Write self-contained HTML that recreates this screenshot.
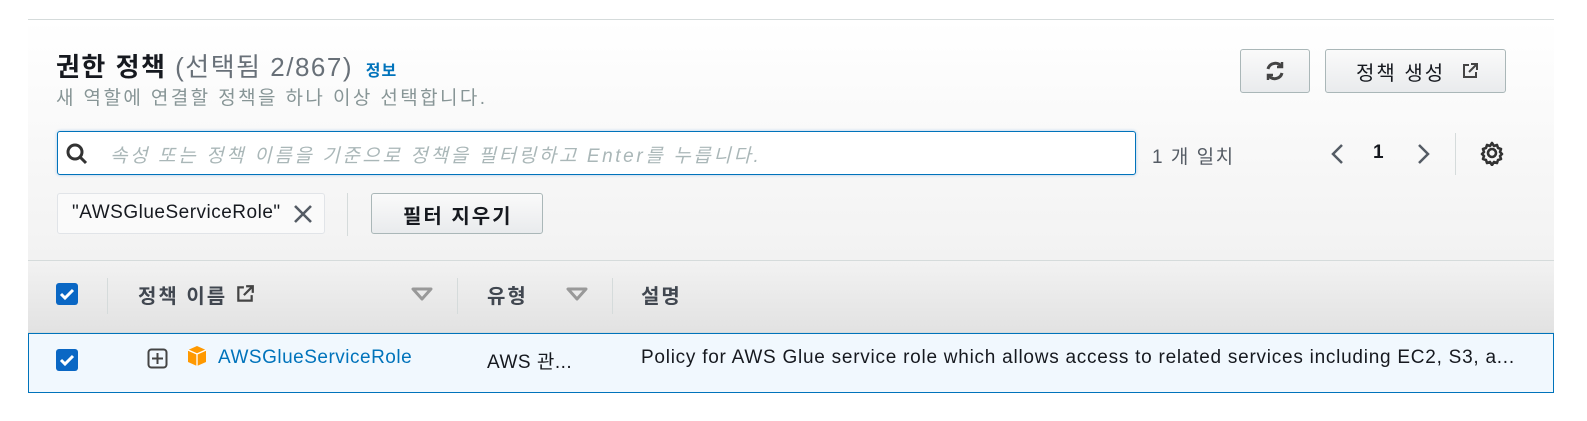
<!DOCTYPE html><html><head><meta charset="utf-8"><style>
body{margin:0;width:1587px;height:421px;background:#fff;font-family:"Liberation Sans","Noto Sans CJK KR",sans-serif;color:#16191f;position:relative;overflow:hidden}
.a{position:absolute;white-space:nowrap}
.panel{left:28px;top:19px;width:1526px;height:241px;border-top:1px solid #d5dbdb;background:linear-gradient(#fff,#f2f2f2)}
.btn{border:1px solid #aab7b8;border-radius:3px;background:linear-gradient(#fafafa,#e9ebed);box-sizing:border-box}
.k{letter-spacing:2px}
</style></head><body>
<div class="a panel"></div>
<div class="a" style="left:56px;top:47px;font-size:26px;letter-spacing:1.5px;font-weight:bold;color:#16191f">권한 정책 <span style="font-weight:normal;color:#687078">(선택됨 2/867)</span> <span style="font-size:16px;letter-spacing:1px;color:#0073bb;margin-left:4px">정보</span></div>
<div class="a" style="left:56px;top:83px;font-size:19px;letter-spacing:2.4px;color:#879596">새 역할에 연결할 정책을 하나 이상 선택합니다.</div>
<div class="a btn" style="left:1240px;top:49px;width:70px;height:44px"></div>
<svg class="a" style="left:1263px;top:59px" width="24" height="24" viewBox="0 0 24 24" fill="none" stroke="#444" stroke-width="3"><path d="M5 10a7.5 7.5 0 0 1 13-3"/><path d="M19 14a7.5 7.5 0 0 1-13 3"/><path d="M19 3v5h-5M5 21v-5h5" stroke-width="2.5"/></svg>
<div class="a btn" style="left:1325px;top:49px;width:181px;height:44px"></div>
<div class="a k" style="left:1356px;top:57px;font-size:20px;color:#16191f">정책 생성</div>
<svg class="a" style="left:1461px;top:62px" width="18" height="18" viewBox="0 0 18 18" fill="none" stroke="#444" stroke-width="2"><path d="M8 3H3v12h12v-5"/><path d="M10 2h6v6M16 2l-8 8"/></svg>
<div class="a" style="left:57px;top:131px;width:1079px;height:44px;box-sizing:border-box;border:1px solid #0073bb;border-radius:3px;background:#fff;box-shadow:0 0 3px #a8c8e8"></div>
<svg class="a" style="left:64px;top:141px" width="26" height="26" viewBox="0 0 26 26" fill="none" stroke="#333" stroke-width="3"><circle cx="11" cy="11" r="7"/><path d="M16 16l6 6"/></svg>
<div class="a" style="left:110px;top:141px;font-size:19px;letter-spacing:2.6px;font-style:italic;color:#aab7b8">속성 또는 정책 이름을 기준으로 정책을 필터링하고 Enter를 누릅니다.</div>
<div class="a" style="left:1152px;top:142px;font-size:19px;letter-spacing:1.5px;color:#545b64">1 개 일치</div>
<svg class="a" style="left:1327px;top:141px" width="110" height="26" viewBox="0 0 110 26" fill="none" stroke="#545b64" stroke-width="2.5"><path d="M15 4L6 13l9 9M92 4l9 9-9 9"/></svg>
<div class="a" style="left:1373px;top:142px;font-size:19px;font-weight:bold">1</div>
<div class="a" style="left:1455px;top:133px;width:1px;height:42px;background:#d5dbdb"></div>
<svg class="a" style="left:1479px;top:140px" width="26" height="26" viewBox="0 0 26 26" fill="none" stroke="#333" stroke-width="2.6"><circle cx="13" cy="13" r="4"/><path d="M13 3l2 3 3-1 1 3 3 1-1 3 2 2-2 2 1 3-3 1-1 3-3-1-2 3-2-3-3 1-1-3-3-1 1-3-2-2 2-2-1-3 3-1 1-3 3 1z" stroke-linejoin="round"/></svg>
<div class="a" style="left:57px;top:193px;width:268px;height:41px;box-sizing:border-box;border:1px solid #e1e4e8;border-radius:3px;background:#fafafa"></div>
<div class="a" style="left:72px;top:202px;font-size:19px;letter-spacing:0.5px;color:#16191f">"AWSGlueServiceRole"</div>
<svg class="a" style="left:292px;top:203px" width="22" height="22" viewBox="0 0 22 22" stroke="#545b64" stroke-width="2.6"><path d="M3 3l16 16M19 3L3 19"/></svg>
<div class="a" style="left:347px;top:193px;width:1px;height:43px;background:#d5dbdb"></div>
<div class="a btn" style="left:371px;top:193px;width:172px;height:41px"></div>
<div class="a k" style="left:403px;top:200px;font-size:20px;font-weight:bold;color:#16191f">필터 지우기</div>
<div class="a" style="left:28px;top:260px;width:1526px;height:73px;border-top:1px solid #d5dbdb;border-bottom:1px solid #d5dbdb;box-sizing:border-box;background:linear-gradient(#f2f2f2,#e2e2e2)"></div>
<div class="a" style="left:28px;top:333px;width:1526px;height:60px;border:1px solid #0073bb;box-sizing:border-box;background:#f1f8fe"></div>
<svg class="a" style="left:56px;top:283px" width="22" height="22"><rect width="22" height="22" rx="3" fill="#0a67c4"/><path d="M5 11l4 4 8-8" stroke="#fff" stroke-width="3" fill="none"/></svg>
<svg class="a" style="left:56px;top:349px" width="22" height="22"><rect width="22" height="22" rx="3" fill="#0a67c4"/><path d="M5 11l4 4 8-8" stroke="#fff" stroke-width="3" fill="none"/></svg>
<div class="a" style="left:107px;top:278px;width:1px;height:36px;background:#d5dbdb"></div>
<div class="a" style="left:457px;top:278px;width:1px;height:36px;background:#d5dbdb"></div>
<div class="a" style="left:612px;top:278px;width:1px;height:36px;background:#d5dbdb"></div>
<div class="a k" style="left:138px;top:280px;font-size:20px;font-weight:bold;color:#414750">정책 이름</div>
<svg class="a" style="left:235px;top:284px" width="20" height="20" viewBox="0 0 18 18" fill="none" stroke="#444" stroke-width="2"><path d="M8 3H3v12h12v-5"/><path d="M10 2h6v6M16 2l-8 8"/></svg>
<svg class="a" style="left:411px;top:287px" width="22" height="14"><path d="M2 2h18l-9 10z" fill="none" stroke="#999" stroke-width="3" stroke-linejoin="round"/></svg>
<svg class="a" style="left:566px;top:287px" width="22" height="14"><path d="M2 2h18l-9 10z" fill="none" stroke="#999" stroke-width="3" stroke-linejoin="round"/></svg>
<div class="a k" style="left:487px;top:280px;font-size:20px;font-weight:bold;color:#414750">유형</div>
<div class="a k" style="left:641px;top:280px;font-size:20px;font-weight:bold;color:#414750">설명</div>
<svg class="a" style="left:147px;top:348px" width="22" height="22"><rect x="1.5" y="1.5" width="18" height="18" rx="3" fill="none" stroke="#444" stroke-width="2"/><path d="M10.5 5v11M5 10.5h11" stroke="#444" stroke-width="2"/></svg>
<svg class="a" style="left:187px;top:345px" width="20" height="22" viewBox="0 0 20 22"><path d="M10 1l9 4v12l-9 4-9-4V5z" fill="#f90"/><path d="M10 9v12M1 5l9 4 9-4" stroke="#fff" stroke-width="1.3" fill="none"/></svg>
<div class="a" style="left:218px;top:347px;font-size:19px;letter-spacing:0.5px;color:#0073bb">AWSGlueServiceRole</div>
<div class="a" style="left:487px;top:347px;font-size:19px;letter-spacing:0.5px;color:#16191f">AWS 관...</div>
<div class="a" style="left:641px;top:347px;font-size:19px;letter-spacing:0.75px;color:#16191f">Policy for AWS Glue service role which allows access to related services including EC2, S3, a...</div>
</body></html>
